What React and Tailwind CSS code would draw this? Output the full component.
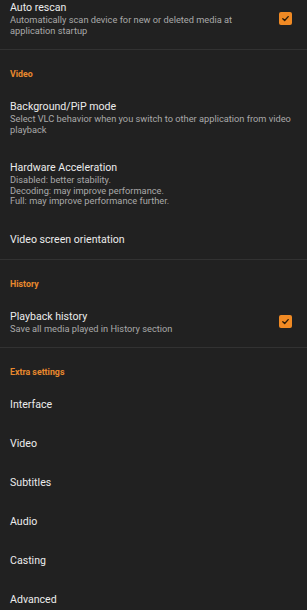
import React from 'react';

const Check = () => (
  <div className="w-[13px] h-[13px] rounded-[2px] bg-[#f08a24] flex items-center justify-center shrink-0">
    <svg width="9" height="9" viewBox="0 0 10 10" fill="none">
      <path d="M2 5.2 L4.1 7.2 L8 2.9" stroke="#2a1a08" strokeWidth="1.5" strokeLinecap="round" strokeLinejoin="round" />
    </svg>
  </div>
);

const Divider = () => <div className="h-px bg-[#323232]" />;

const Header = ({ children }) => (
  <div className="pl-[10px] pt-[18px] pb-[7px] text-[8.8px] leading-[12px] font-bold text-[#e8892e]">
    {children}
  </div>
);

const Item = ({ title, lines = [], checked, className = '' }) => (
  <div className={`flex items-center pl-[10px] pr-[15px] py-[13px] ${className}`}>
    <div className="flex-1 min-w-0">
      <div className="text-[10.6px] leading-[13px] text-[#ececec]">{title}</div>
      {lines.length > 0 && (
        <div className="mt-[1px] text-[9.25px] leading-[10.5px] text-[#a9a9a9] whitespace-nowrap">
          {lines.map((l) => (
            <div key={l}>{l}</div>
          ))}
        </div>
      )}
    </div>
    {checked && <Check />}
  </div>
);

export default function App() {
  const extras = ['Interface', 'Video', 'Subtitles', 'Audio', 'Casting', 'Advanced'];
  return (
    <div className="w-[307px] h-[610px] overflow-hidden bg-[#212121] font-['Roboto',sans-serif]">
      <Item
        className="-mt-[12px]"
        title="Auto rescan"
        lines={['Automatically scan device for new or deleted media at', 'application startup']}
        checked
      />
      <Divider />

      <Header>Video</Header>
      <Item
        title="Background/PiP mode"
        lines={['Select VLC behavior when you switch to other application from video', 'playback']}
      />
      <Item
        title="Hardware Acceleration"
        lines={['Disabled: better stability.', 'Decoding: may improve performance.', 'Full: may improve performance further.']}
      />
      <Item title="Video screen orientation" />
      <Divider />

      <Header>History</Header>
      <Item title="Playback history" lines={['Save all media played in History section']} checked />
      <Divider />

      <Header>Extra settings</Header>
      {extras.map((t) => (
        <Item key={t} title={t} />
      ))}
    </div>
  );
}
